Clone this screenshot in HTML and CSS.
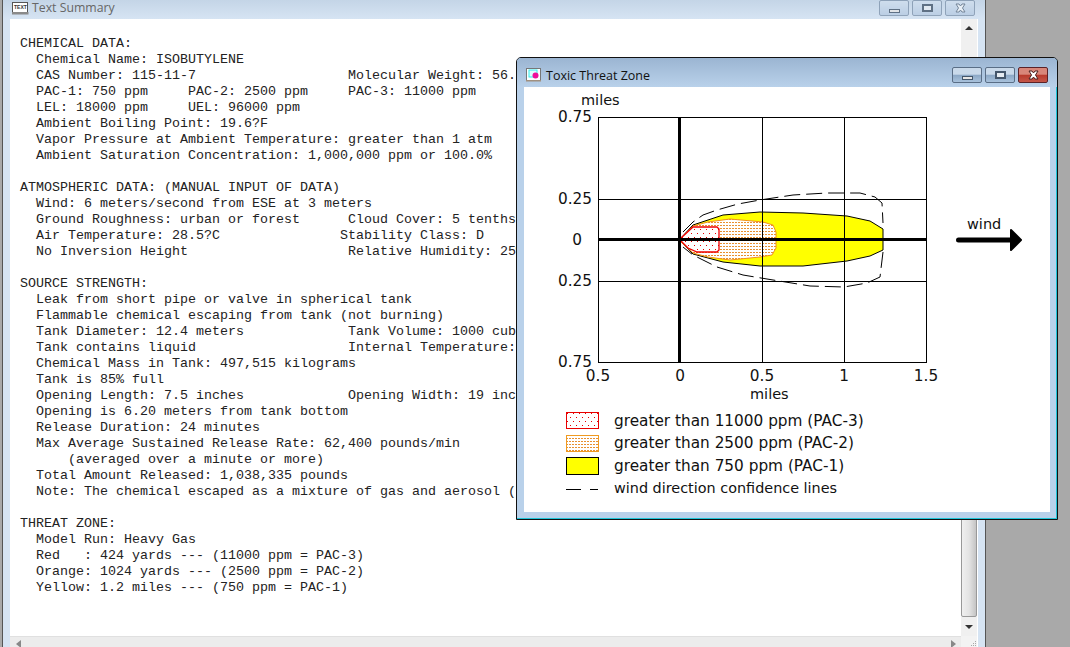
FILE: index.html
```html
<!DOCTYPE html>
<html lang="en">
<head>
<meta charset="utf-8">
<title>Text Summary</title>
<link rel="stylesheet" href="styles.css">
</head>
<body>
<div class="desktop">
  <section class="win win-text">
    <header class="titlebar titlebar-inactive">
      <svg class="doc-icon" width="17" height="13" viewBox="0 0 17 13"><rect x="0.5" y="0.5" width="15" height="10" fill="#fff" stroke="#555"/><rect x="0" y="10" width="16.5" height="2.5" fill="#8a8a8a"/><text x="2" y="7" font-size="5" font-family="Liberation Sans" font-weight="bold" fill="#333">TEXT</text></svg>
      <span class="title title-inactive">Text Summary</span>
      <div class="controls controls-inactive">
        <button class="ctl"><i class="g-min"></i></button>
        <button class="ctl"><i class="g-max"></i></button>
        <button class="ctl"><svg class="g-x" width="13" height="10" viewBox="0 0 13 10"><path d="M2 1 L5 1 L6.5 3 L8 1 L11 1 L8.5 5 L11 9 L8 9 L6.5 7 L5 9 L2 9 L4.5 5 Z" fill="#eef3f8" stroke="#5f7185"/></svg></button>
      </div>
    </header>
    <div class="client">
      <div class="client-top">
        <pre class="summary">
CHEMICAL DATA:
  Chemical Name: ISOBUTYLENE
  CAS Number: 115-11-7                   Molecular Weight: 56.11 g/mol
  PAC-1: 750 ppm     PAC-2: 2500 ppm     PAC-3: 11000 ppm
  LEL: 18000 ppm     UEL: 96000 ppm
  Ambient Boiling Point: 19.6?F
  Vapor Pressure at Ambient Temperature: greater than 1 atm
  Ambient Saturation Concentration: 1,000,000 ppm or 100.0%

ATMOSPHERIC DATA: (MANUAL INPUT OF DATA)
  Wind: 6 meters/second from ESE at 3 meters
  Ground Roughness: urban or forest      Cloud Cover: 5 tenths
  Air Temperature: 28.5?C               Stability Class: D
  No Inversion Height                    Relative Humidity: 25%

SOURCE STRENGTH:
  Leak from short pipe or valve in spherical tank
  Flammable chemical escaping from tank (not burning)
  Tank Diameter: 12.4 meters             Tank Volume: 1000 cubic meters
  Tank contains liquid                   Internal Temperature: 28.5?C
  Chemical Mass in Tank: 497,515 kilograms
  Tank is 85% full
  Opening Length: 7.5 inches             Opening Width: 19 inches
  Opening is 6.20 meters from tank bottom
  Release Duration: 24 minutes
  Max Average Sustained Release Rate: 62,400 pounds/min
      (averaged over a minute or more)
  Total Amount Released: 1,038,335 pounds
  Note: The chemical escaped as a mixture of gas and aerosol (two phase flow).

THREAT ZONE:
  Model Run: Heavy Gas
  Red   : 424 yards --- (11000 ppm = PAC-3)
  Orange: 1024 yards --- (2500 ppm = PAC-2)
  Yellow: 1.2 miles --- (750 ppm = PAC-1)</pre>
        <div class="vscroll">
          <div class="arrow-btn"><i class="tri-up"></i></div>
          <div class="track"><div class="thumb"></div></div>
          <div class="arrow-btn"><i class="tri-down"></i></div>
        </div>
      </div>
      <div class="hscroll-row">
        <div class="hscroll">
          <i class="tri-left"></i>
          <i class="tri-right"></i>
        </div>
        <div class="corner"><svg width="8" height="8" viewBox="0 0 8 8"><path d="M6 1h1v1H6zM4 3h1v1H4zM6 3h1v1H6zM2 5h1v1H2zM4 5h1v1H4zM6 5h1v1H6z" fill="#a8a8a8"/></svg></div>
      </div>
    </div>
  </section>

  <section class="win win-chart">
    <header class="titlebar titlebar-active">
      <svg class="zone-icon" width="16" height="14" viewBox="0 0 16 14"><rect x="0.5" y="0.5" width="14" height="12" fill="#fff" stroke="#777"/><rect x="3" y="2" width="8" height="7" fill="#dff" stroke="#3ee"/><circle cx="9.5" cy="7.5" r="3" fill="#f0109a"/><rect x="0" y="12" width="15" height="1.5" fill="#a09080"/></svg>
      <span class="title">Toxic Threat Zone</span>
      <div class="controls">
        <button class="ctl ctl-on"><i class="g-min"></i></button>
        <button class="ctl ctl-on"><i class="g-max"></i></button>
        <button class="ctl ctl-close"><svg class="g-x" width="13" height="10" viewBox="0 0 13 10"><path d="M2 1 L5 1 L6.5 3 L8 1 L11 1 L8.5 5 L11 9 L8 9 L6.5 7 L5 9 L2 9 L4.5 5 Z" fill="#fff" stroke="#4a2020"/></svg></button>
      </div>
    </header>
    <div class="chart-client">
      <svg class="plot" width="526" height="318" viewBox="524 87 526 318">
        <defs>
          <pattern id="dots-orange" width="3" height="3" patternUnits="userSpaceOnUse"><rect width="3" height="3" fill="#fff"/><rect x="0" y="0" width="2" height="1" fill="#e89030"/></pattern>
          <pattern id="dots-red" width="6" height="8" patternUnits="userSpaceOnUse"><rect width="6" height="8" fill="#fff"/><rect x="1" y="1" width="1" height="1" fill="#e80000"/><rect x="4" y="5" width="1" height="1" fill="#e80000"/></pattern>
        </defs>
        <rect x="598.5" y="117.5" width="328" height="245" fill="#fff" stroke="#000"/>
        <path class="zone-y" d="M681 238 L693 225 L723 215 L760 212 L803 213 L847 216 L870 221 L883 229 L883 250 L870 256 L847 261 L803 266 L760 266 L723 262 L693 254 L681 242 Z"/>
        <path class="zone-o" d="M681 238 L693 226 L708 222 L730 219 L763 222 L773 225 L776 232 L776 248 L772 255 L760 257 L730 260 L708 257 L693 253 L681 242 Z"/>
        <path class="zone-r" d="M681 238 L693 227 L717 227 L719 229 L719 250 L717 252 L697 252 L688 248 L681 241 Z"/>
        <path class="conf" d="M683 232 L693 222 L703 215 L717 210 L738 204 L760 200 L793 195 L827 193 L860 193 L875 197 L882 203 L883 223"/>
        <path class="conf" d="M883 252 L880 277 L867 283 L844 287 L810 286 L767 279 L743 275 L717 267 L693 255 L683 247"/>
        <path class="grid" d="M762.5 117 V362 M844.5 117 V362 M598 199.5 H926 M598 281.5 H926"/>
        <path class="axis" d="M679.5 117 V362 M598 239.5 H926"/>
        <g class="lbl">
          <text x="581" y="105">miles</text>
          <text x="750" y="399">miles</text>
          <text x="967" y="229">wind</text>
        </g>
        <g class="lbl num">
          <text x="592" y="122" text-anchor="end">0.75</text>
          <text x="592" y="204" text-anchor="end">0.25</text>
          <text x="582" y="245" text-anchor="end">0</text>
          <text x="592" y="286" text-anchor="end">0.25</text>
          <text x="592" y="367" text-anchor="end">0.75</text>
          <text x="598" y="381" text-anchor="middle">0.5</text>
          <text x="680" y="381" text-anchor="middle">0</text>
          <text x="762" y="381" text-anchor="middle">0.5</text>
          <text x="844" y="381" text-anchor="middle">1</text>
          <text x="926" y="381" text-anchor="middle">1.5</text>
        </g>
        <path class="wind" d="M958.5 240 H1012"/>
        <path class="wind-head" d="M1011 230 L1021 240 L1011 250 Z"/>
      </svg>
      <ul class="legend">
        <li class="legend-row"><svg class="swatch" width="33" height="17"><rect x="0.5" y="0.5" width="32" height="16" fill="url(#dots-red)" stroke="#e80000"/></svg><span>greater than 11000 ppm (PAC-3)</span></li>
        <li class="legend-row"><svg class="swatch" width="33" height="17"><rect x="0.5" y="0.5" width="32" height="16" fill="url(#dots-orange)" stroke="#f09a20"/></svg><span>greater than 2500 ppm (PAC-2)</span></li>
        <li class="legend-row"><svg class="swatch" width="33" height="18"><rect x="0.5" y="0.5" width="32" height="17" fill="#ff0" stroke="#000"/></svg><span>greater than 750 ppm (PAC-1)</span></li>
        <li class="legend-row legend-row-wind"><svg class="swatch" width="33" height="17"><path d="M0 9.5 H15 M24 9.5 H32" stroke="#000"/></svg><span>wind direction confidence lines</span></li>
      </ul>
    </div>
  </section>
</div>
</body>
</html>
```

FILE: styles.css
```css
* { box-sizing: border-box; }
html, body { margin: 0; height: 100%; overflow: hidden; }
body { background: #a9a9a9; }
.desktop { position: relative; width: 1070px; height: 647px; overflow: hidden; }
.win { position: absolute; display: flex; flex-direction: column; }

.win-text {
  left: 2px; top: -1px; width: 984px; height: 649px;
  background: #d6e4f3;
  border-left: 1px solid #555;
  border-right: 1px solid #555;
  padding: 0 7px 0 7px;
}
.win-chart {
  left: 516px; top: 57px; width: 542px; height: 463px;
  background: #b9d1ea;
  border: 1px solid #111;
  border-radius: 5px 5px 0 0;
  padding: 0 7px 7px 7px;
  box-shadow: inset -1px -1px 0 #1fc4d8;
}

.titlebar { display: flex; align-items: flex-start; flex: none; }
.titlebar-inactive {
  height: 20px; margin: 0 -7px; padding: 1px 10px 0 9px;
  background: linear-gradient(#c3d4e6, #d6e4f3);
}
.titlebar-active {
  height: 29px; margin: 0 -7px; padding: 0 9px 0 9px;
  background: linear-gradient(#9bb5d2, #b9d1ea);
  border-radius: 4px 4px 0 0;
}
.doc-icon { margin: 2px 3px 0 0; flex: none; }
.zone-icon { margin: 10px 4px 0 0; flex: none; }
.title { font: 12.5px/1 "Open Sans", "Noto Sans", sans-serif; color: #111; padding-top: 12px; }
.title-inactive { font-size: 12.3px; color: #666; padding-top: 2px; }
.controls { margin-left: auto; display: flex; gap: 3px; padding-top: 9px; }
.controls-inactive { padding-top: 0; margin-right: 0; opacity: 0.8; }
.ctl {
  width: 30px; height: 16px; padding: 0; display: flex; align-items: center; justify-content: center;
  border: 1px solid #8095ad; border-radius: 2px;
  background: linear-gradient(#d2e0ef, #b6cbe2);
}
.ctl-on { background: linear-gradient(#c9d9ea 45%, #8ba7c5 50%, #a9c2dc); border-color: #5a6e86; }
.ctl-close { background: linear-gradient(#d8867a 45%, #b8392c 50%, #c4574a); border-color: #5b2228; }
.g-min { display: block; flex: none; width: 11px; height: 4px; margin-top: 5px; background: #e6e6e6; border: 1px solid #44566b; }
.g-max { display: block; flex: none; width: 11px; height: 8px; background: #e6ecf2; border: 2px solid #44566b; }
.g-x { display: block; flex: none; }

.client { flex: 1; min-height: 0; display: flex; flex-direction: column; background: #fff; }
.client-top { flex: 1; min-height: 0; display: flex; }
.summary {
  flex: 1; min-width: 0; margin: 0; padding: 17px 0 0 10px; overflow: hidden;
  font: 13.33px/16px "Liberation Mono", "Courier New", monospace; color: #222;
}
.vscroll { width: 16px; flex: none; display: flex; flex-direction: column; background: #f0f0f0; margin-right: 1px; }
.arrow-btn { height: 18px; flex: none; display: flex; align-items: center; justify-content: center; }
.track { flex: 1; padding-top: 40px; padding-bottom: 1px; display: flex; }
.thumb { flex: 1; border: 1px solid #999; border-radius: 2px; background: linear-gradient(90deg, #f0f0f0, #e4e4e4 50%, #c4c4c4); }
.tri-up, .tri-down, .tri-left, .tri-right { display: block; width: 0; height: 0; border-style: solid; }
.tri-up { border-width: 0 4px 4px; border-color: transparent transparent #333; }
.tri-down { border-width: 4px 4px 0; border-color: #333 transparent transparent; }
.tri-left { border-width: 4px 5px 4px 0; border-color: transparent #888 transparent transparent; }
.tri-right { border-width: 4px 0 4px 5px; border-color: transparent transparent transparent #888; }
.hscroll-row { height: 12px; flex: none; display: flex; margin-right: 1px; }
.hscroll {
  flex: 1; background: #ececec;
  display: flex; justify-content: space-between; align-items: flex-start; padding: 3px 5px 0 6px;
  border-top: 1px solid #e0e0e0;
}
.corner { width: 16px; flex: none; background: #f3f3f3; display: flex; align-items: flex-end; justify-content: flex-end; }

.chart-client { flex: 1; min-height: 0; background: #fff; display: flex; flex-direction: column; }
.plot { display: block; flex: none; }
.zone-y { fill: #ff0; stroke: #000; stroke-width: 1; }
.zone-o { fill: url(#dots-orange); stroke: #f09020; stroke-width: 1; }
.zone-r { fill: url(#dots-red); stroke: #f00000; stroke-width: 1.3; }
.conf { fill: none; stroke: #000; stroke-width: 1; stroke-dasharray: 16 6; }
.grid { fill: none; stroke: #000; stroke-width: 1; }
.axis { fill: none; stroke: #000; stroke-width: 3; }
.lbl text { font: 14.5px "DejaVu Sans", sans-serif; fill: #111; }
.lbl.num text { font-size: 15.3px; }
.wind { fill: none; stroke: #000; stroke-width: 5; stroke-linecap: round; }
.wind-head { fill: #000; stroke: #000; stroke-width: 2; stroke-linejoin: round; }

.legend { list-style: none; margin: 7px 0 0 42px; padding: 0; display: flex; flex-direction: column; gap: 5px; }
.legend-row { display: flex; align-items: center; height: 17.5px; font: 15.3px "DejaVu Sans", sans-serif; color: #111; }
.legend-row-wind { font-size: 14.4px; }
.swatch { flex: none; margin-right: 15px; }
```
